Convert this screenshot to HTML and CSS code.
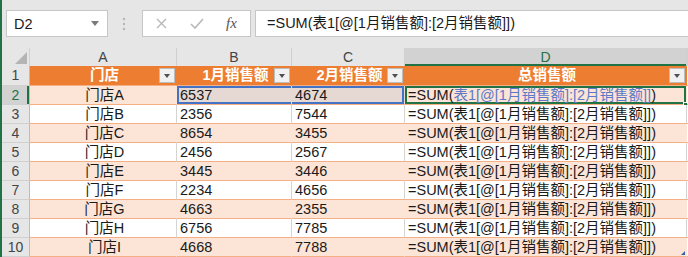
FILE: index.html
```html
<!DOCTYPE html>
<html lang="zh">
<head>
    <meta charset="UTF-8">
    <title>门店销售额</title>
    <link rel="stylesheet" href="styles.css">
</head>
<body>
    <div class="bar">
        <div class="namebox">
            <span>D2</span>
            <svg class="caret" width="8" height="5" viewBox="0 0 8 5"><path d="M0 0H8L4 5Z" fill="#7a7a7a"/></svg>
        </div>
        <svg class="grip" width="4" height="14" viewBox="0 0 4 14">
            <circle cx="2" cy="2" r="1.2" fill="#b5b5b5"/>
            <circle cx="2" cy="7" r="1.2" fill="#b5b5b5"/>
            <circle cx="2" cy="12" r="1.2" fill="#b5b5b5"/>
        </svg>
        <div class="fxbox">
            <svg class="ico-x" width="11" height="11" viewBox="0 0 11 11"><path d="M1 1L10 10M10 1L1 10" stroke="#b8b8b8" stroke-width="1.4"/></svg>
            <svg class="ico-ok" width="14" height="11" viewBox="0 0 14 11"><path d="M1 6L5 10L13 1" stroke="#b8b8b8" stroke-width="1.6" fill="none"/></svg>
            <span class="fx">fx</span>
        </div>
        <div class="formula">=SUM(表1[@[1月销售额]:[2月销售额]])</div>
    </div>

    <div class="sheet">
        <div class="row colhead">
            <div class="corner"><svg width="12" height="12" viewBox="0 0 12 12"><path d="M12 0V12H0Z" fill="#b4b4b4"/></svg></div>
            <div class="ch">A</div>
            <div class="ch">B</div>
            <div class="ch">C</div>
            <div class="ch sel">D</div>
            <div class="ch"></div>
        </div>

        <div class="row head">
            <div class="rh">1</div>
            <div class="c">门店<span class="filter"></span></div>
            <div class="c">1月销售额<span class="filter"></span></div>
            <div class="c">2月销售额<span class="filter"></span></div>
            <div class="c">总销售额<span class="filter"></span></div>
            <div class="c e"></div>
        </div>

        <div class="row band">
            <div class="rh sel">2</div>
            <div class="c store">门店A</div>
            <div class="c num ref-l">6537</div>
            <div class="c num ref-r">4674</div>
            <div class="c active">=SUM(<span class="ref">表1[@[1月销售额]:[2月销售额]]</span>)<span class="handle"></span></div>
            <div class="c e"></div>
        </div>
        <div class="row">
            <div class="rh">3</div>
            <div class="c store">门店B</div>
            <div class="c num">2356</div>
            <div class="c num">7544</div>
            <div class="c">=SUM(表1[@[1月销售额]:[2月销售额]])</div>
            <div class="c e"></div>
        </div>
        <div class="row band">
            <div class="rh">4</div>
            <div class="c store">门店C</div>
            <div class="c num">8654</div>
            <div class="c num">3455</div>
            <div class="c">=SUM(表1[@[1月销售额]:[2月销售额]])</div>
            <div class="c e"></div>
        </div>
        <div class="row">
            <div class="rh">5</div>
            <div class="c store">门店D</div>
            <div class="c num">2456</div>
            <div class="c num">2567</div>
            <div class="c">=SUM(表1[@[1月销售额]:[2月销售额]])</div>
            <div class="c e"></div>
        </div>
        <div class="row band">
            <div class="rh">6</div>
            <div class="c store">门店E</div>
            <div class="c num">3445</div>
            <div class="c num">3446</div>
            <div class="c">=SUM(表1[@[1月销售额]:[2月销售额]])</div>
            <div class="c e"></div>
        </div>
        <div class="row">
            <div class="rh">7</div>
            <div class="c store">门店F</div>
            <div class="c num">2234</div>
            <div class="c num">4656</div>
            <div class="c">=SUM(表1[@[1月销售额]:[2月销售额]])</div>
            <div class="c e"></div>
        </div>
        <div class="row band">
            <div class="rh">8</div>
            <div class="c store">门店G</div>
            <div class="c num">4663</div>
            <div class="c num">2355</div>
            <div class="c">=SUM(表1[@[1月销售额]:[2月销售额]])</div>
            <div class="c e"></div>
        </div>
        <div class="row">
            <div class="rh">9</div>
            <div class="c store">门店H</div>
            <div class="c num">6756</div>
            <div class="c num">7785</div>
            <div class="c">=SUM(表1[@[1月销售额]:[2月销售额]])</div>
            <div class="c e"></div>
        </div>
        <div class="row band">
            <div class="rh">10</div>
            <div class="c store">门店I</div>
            <div class="c num">4668</div>
            <div class="c num">7788</div>
            <div class="c last">=SUM(表1[@[1月销售额]:[2月销售额]])<span class="resize"></span></div>
            <div class="c e"></div>
        </div>
    </div>
</body>
</html>
```

FILE: styles.css
```css
*{ margin: 0; padding: 0; box-sizing: border-box;}
body{ width: 688px; height: 257px; overflow: hidden; background: #e6e6e6; border-left: 2px solid #217346;
      font-family: "Liberation Sans", "Noto Sans CJK SC", sans-serif; font-size: 14.5px; color: #1a1a1a;}

/* formula bar */
.bar{ height: 48px; padding-top: 10px; display: flex; align-items: flex-start;}
.namebox{ margin-left: 4px; width: 102px; height: 27px; background: #fff; border: 1px solid #c6c6c6;
          display: flex; align-items: center; justify-content: space-between; padding: 0 8px 0 7px;}
.grip{ margin: 7px 0 0 14px;}
.fxbox{ margin-left: 16px; width: 109px; height: 27px; background: #fff; border: 1px solid #c6c6c6;
        display: flex; align-items: center; padding-left: 13px;}
.ico-ok{ margin-left: 23px;}
.fx{ margin-left: 22px; font-family: "Liberation Serif", serif; font-style: italic; font-size: 15px; color: #555;}
.formula{ flex: 1; margin-left: 4px; height: 27px; background: #fff; border: 1px solid #c6c6c6; border-right: 0;
          padding-left: 11px; line-height: 25px; white-space: nowrap;}

/* grid */
.row{ display: grid; grid-template-columns: 28px 147px 115px 113px 282px 1fr; height: 19px;}
.row > div{ border-right: 1px solid #d4d4d4; border-bottom: 1px solid #f4b084; line-height: 18px; white-space: nowrap; position: relative; background: #fff;}
.row .rh{ background: #e6e6e6; color: #444; text-align: center; border-right-color: #bcbcbc; border-bottom-color: #d0d0d0; font-size: 14px;}
.row .rh.sel{ background: #d2d2d2; color: #217346; box-shadow: inset -2px 0 0 #217346;}

.colhead{ height: 18px;}
.colhead > div{ background: #e6e6e6; border-right-color: #d0d0d0; border-bottom-color: #bcbcbc; text-align: center; color: #444; font-size: 14px; line-height: 18px;}
.colhead .sel{ background: #d2d2d2; color: #217346; box-shadow: inset 0 -2px 0 #217346;}
.corner{ display: flex; justify-content: flex-end; align-items: flex-end; padding: 0 2px 2px 0;}

.head{ height: 20px;}
.head .c{ background: #ed7d31; border-right-color: #ed7d31; color: #fff; font-weight: bold; text-align: center; line-height: 19px;}
.filter{ position: absolute; right: 1px; top: 2px; width: 16px; height: 15px; background: #f1f1f1; border: 1px solid #bdbdbd;}
.filter::after{ content: ""; position: absolute; left: 4px; top: 5px; border-left: 3.5px solid transparent; border-right: 3.5px solid transparent; border-top: 4px solid #505050;}

.band .c{ background: #fce4d6; border-right-color: #fce4d6;}
.row .e{ background: #fff; border-right: 0;}
.c{ padding-left: 3px;}
.store{ text-align: center;}

/* reference and active cell */
.band .ref-l, .band .ref-r{ background: #e6d9d4; border-right-color: #e6d9d4;}
.ref-l{ box-shadow: inset 2px 2px 0 #4472c4, inset 0 -2px 0 #4472c4;}
.ref-r{ box-shadow: inset -2px 2px 0 #4472c4, inset 0 -2px 0 #4472c4;}
.active{ box-shadow: inset 0 0 0 2px #217346;}
.ref{ color: #5b79c8;}
.handle{ position: absolute; right: -2px; bottom: -3px; width: 5px; height: 5px; background: #217346; border: 1px solid #fff;}
.resize{ position: absolute; right: 1px; bottom: 1px; width: 0; height: 0; border-left: 4px solid transparent; border-bottom: 4px solid #3a5fb0;}
```
